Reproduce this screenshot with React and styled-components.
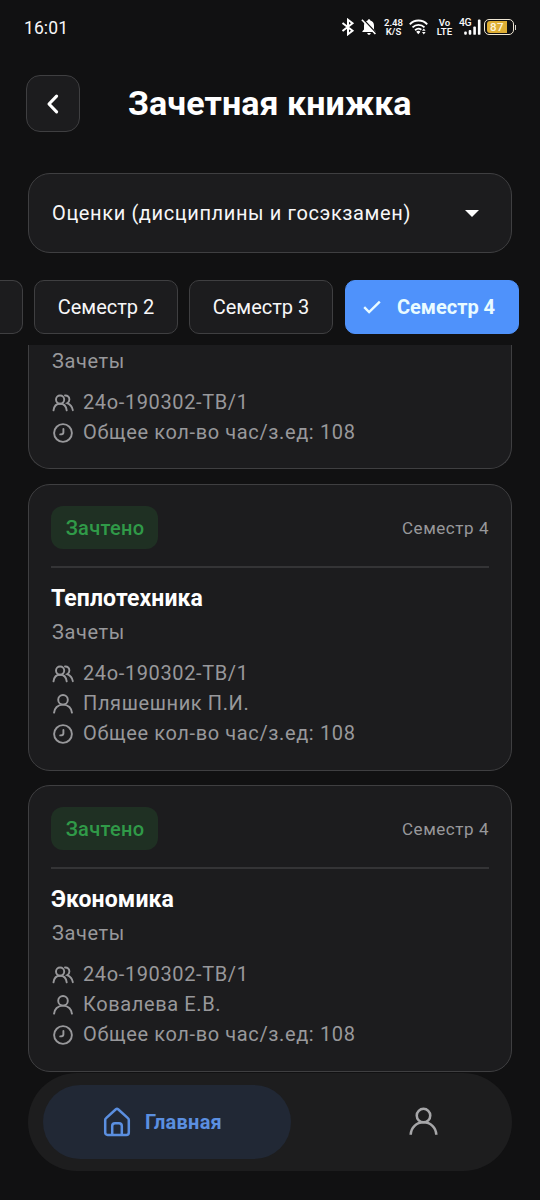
import styled, { createGlobalStyle } from "styled-components";

const GlobalStyle = createGlobalStyle`
  * {
    box-sizing: border-box;
  }

  body {
    margin: 0;
    background: #111112;
    font-family: Roboto, "Liberation Sans", sans-serif;
    color: #f7f7f8;
  }

  svg {
    display: block;
    flex: none;
  }
`;

const semesters = [
  { name: "Семестр 2", active: false },
  { name: "Семестр 3", active: false },
  { name: "Семестр 4", active: true },
];

const records = [
  {
    kind: "Зачеты",
    group: "24о-190302-ТВ/1",
    hours: 108,
  },
  {
    status: "Зачтено",
    semester: "Семестр 4",
    subject: "Теплотехника",
    kind: "Зачеты",
    group: "24о-190302-ТВ/1",
    teacher: "Пляшешник П.И.",
    hours: 108,
  },
  {
    status: "Зачтено",
    semester: "Семестр 4",
    subject: "Экономика",
    kind: "Зачеты",
    group: "24о-190302-ТВ/1",
    teacher: "Ковалева Е.В.",
    hours: 108,
  },
];

function BluetoothIcon() {
  return (
    <svg width="14" height="18" viewBox="0 0 14 18" fill="none" stroke="#fff" strokeWidth="2">
      <path d="M1.5 5 L11.5 12.8 L7 16.2 V1.8 L11.5 5.2 L1.5 13" />
    </svg>
  );
}

function BellOffIcon() {
  return (
    <svg width="16" height="18" viewBox="0 0 16 18">
      <path
        d="M8 1.2 C8.8 1.2 9.3 1.8 9.3 2.5 C11.7 3.1 13 5 13 7.5 V11.5 L14.6 13.2 V14 H1.4 V13.2 L3 11.5 V7.5 C3 5 4.3 3.1 6.7 2.5 C6.7 1.8 7.2 1.2 8 1.2 Z M6.3 14.9 H9.7 C9.7 16 9 16.7 8 16.7 C7 16.7 6.3 16 6.3 14.9 Z"
        fill="#fff"
      />
      <path d="M2.2 1.2 L15.6 15.4" stroke="#111112" strokeWidth="1.4" />
      <path d="M0.9 1.8 L14.4 16" stroke="#fff" strokeWidth="1.6" />
    </svg>
  );
}

function WifiIcon() {
  return (
    <svg width="19" height="16" viewBox="0 0 19 16" fill="none" stroke="#fff" strokeWidth="1.9">
      <path d="M0.8 5.3 C5.5 0.3 13.5 0.3 18.2 5.3" />
      <path d="M3.5 8.4 C6.9 5 12.1 5 15.5 8.4" />
      <path d="M6.1 11.2 C8 9.4 10.6 9.4 12.3 10.8" />
      <path d="M7.2 12.7 C8.6 11.4 10.2 11.4 11.4 12.7 L9.3 15.2 Z" fill="#fff" stroke="none" />
      <path d="M13 11.8 L14.8 9.4 L16.6 11.8 Z M13 13 L14.8 15.4 L16.6 13 Z" fill="#fff" stroke="none" />
    </svg>
  );
}

function SignalIcon() {
  return (
    <svg width="17" height="16" viewBox="0 0 17 16" fill="#fff">
      <rect x="0.2" y="12.6" width="2.6" height="3.2" rx="1" />
      <rect x="4.7" y="10.9" width="2.6" height="4.9" rx="1" />
      <rect x="9.3" y="7.6" width="2.6" height="8.2" rx="0.9" />
      <rect x="13.9" y="0.6" width="2.6" height="15.2" rx="0.9" />
    </svg>
  );
}

function BackIcon() {
  return (
    <svg width="14" height="22" viewBox="0 0 14 22" fill="none" stroke="#fff" strokeWidth="3.1" strokeLinecap="round" strokeLinejoin="round">
      <path d="M10.6 3.2 L3 11 L10.6 18.8" />
    </svg>
  );
}

function CheckIcon() {
  return (
    <svg width="18" height="14" viewBox="0 0 18 14" fill="none" stroke="#e9fbff" strokeWidth="2.4">
      <path d="M1.2 7.2 L6.1 12 L16.8 1.6" />
    </svg>
  );
}

function GroupIcon() {
  return (
    <svg width="22" height="22" viewBox="0 0 22 22" fill="none" stroke="currentColor" strokeWidth="1.9" strokeLinecap="round">
      <circle cx="8.1" cy="7.6" r="4.1" />
      <path d="M1.5 18.4 C2 14.4 4.6 11.8 8.1 11.8 C11.6 11.8 14.2 14.4 14.7 18.4" />
      <path d="M13 3.5 C15.6 3.3 17.4 5 17.4 7.4 C17.4 9.1 16.5 10.4 15.1 11.2 C18.3 12.5 20.3 15 20.8 18.2" />
    </svg>
  );
}

function PersonIcon({ size = 22, stroke = 1.9 }) {
  return (
    <svg width={size} height={size} viewBox="0 0 22 22" fill="none" stroke="currentColor" strokeWidth={stroke}>
      <circle cx="11" cy="6.8" r="4.8" />
      <path d="M1.9 20.4 C2.1 15.2 6 11.6 11 11.6 C16 11.6 19.9 15.2 20.1 20.4" />
    </svg>
  );
}

function ClockIcon() {
  return (
    <svg width="22" height="22" viewBox="0 0 22 22" fill="none" stroke="currentColor" strokeWidth="1.9" strokeLinecap="round" strokeLinejoin="round">
      <circle cx="11" cy="11" r="8.9" />
      <path d="M11.4 6.9 V10.4 C11.4 11.8 10.4 12.4 8.2 12.4" />
    </svg>
  );
}

function HomeIcon() {
  return (
    <svg width="28" height="30" viewBox="0 0 28 30" fill="none" stroke="currentColor" strokeWidth="2.5" strokeLinejoin="round">
      <path d="M2.2 13 C2.2 12.2 2.5 11.6 3.1 11.1 L12.9 2.2 C13.6 1.6 14.4 1.6 15.1 2.2 L24.9 11.1 C25.5 11.6 25.8 12.2 25.8 13 V25.4 C25.8 27 25 27.9 23.4 27.9 H4.6 C3 27.9 2.2 27 2.2 25.4 Z" />
      <path d="M9.2 27.5 V19 C9.2 17.2 10.3 16.2 12 16.2 H16 C17.7 16.2 18.8 17.2 18.8 19 V27.5" />
    </svg>
  );
}

function RecordCard({ record }) {
  return (
    <Card $scrolled={!record.subject}>
      {record.subject && (
        <>
          <CardHead>
            <Badge>{record.status}</Badge>
            <CardSemester>{record.semester}</CardSemester>
          </CardHead>
          <Subject>{record.subject}</Subject>
        </>
      )}
      <Kind>{record.kind}</Kind>
      <Info>
        <GroupIcon />
        {record.group}
      </Info>
      {record.teacher && (
        <Info>
          <PersonIcon />
          {record.teacher}
        </Info>
      )}
      <Info>
        <ClockIcon />
        Общее кол-во час/з.ед: {record.hours}
      </Info>
    </Card>
  );
}

function App() {
  return (
    <Screen>
      <GlobalStyle />
      <StatusBar>
        <Time>16:01</Time>
        <StatusIcons>
          <BluetoothIcon />
          <BellOffIcon />
          <Stacked $width={21}>
            <span>2.48</span>
            <span>K/S</span>
          </Stacked>
          <WifiIcon />
          <Stacked $width={17}>
            <span>Vo</span>
            <span>LTE</span>
          </Stacked>
          <Network>
            <NetworkType>4G</NetworkType>
            <SignalIcon />
          </Network>
          <BatteryWrap>
            <Battery>
              <BatteryLevel>87</BatteryLevel>
            </Battery>
            <BatteryTip />
          </BatteryWrap>
        </StatusIcons>
      </StatusBar>

      <Header>
        <BackButton>
          <BackIcon />
        </BackButton>
        <Title>Зачетная книжка</Title>
      </Header>

      <Select>
        Оценки (дисциплины и госэкзамен)
        <Caret />
      </Select>

      <Chips>
        <ChipEdge />
        {semesters.map((semester) => (
          <Chip key={semester.name} $active={semester.active}>
            {semester.active && <CheckIcon />}
            {semester.name}
          </Chip>
        ))}
      </Chips>

      <List>
        {records.map((record, i) => (
          <RecordCard record={record} key={i} />
        ))}
      </List>

      <Nav>
        <NavItem $active>
          <HomeIcon />
          Главная
        </NavItem>
        <NavItem>
          <PersonIcon size={31} stroke={1.8} />
        </NavItem>
      </Nav>
    </Screen>
  );
}

const Screen = styled.div`
  width: 540px;
  height: 1200px;
  overflow: hidden;
  display: flex;
  flex-direction: column;
  background: #111112;
`;

const StatusBar = styled.div`
  height: 56px;
  flex: none;
  display: flex;
  align-items: center;
  justify-content: space-between;
  padding: 0 23px 0 24px;
`;

const Time = styled.span`
  font-size: 17.5px;
  letter-spacing: 0.1px;
`;

const StatusIcons = styled.div`
  display: grid;
  grid-template-columns: 20px 22px 26px 27px 23px 25px 33px;
  align-items: center;
  padding-bottom: 2px;
`;

const Stacked = styled.div`
  width: ${(props) => props.$width}px;
  display: flex;
  flex-direction: column;
  align-items: center;
  font-size: 9.6px;
  line-height: 9.5px;
  font-weight: 600;
`;

const Network = styled.div`
  display: flex;
  align-items: flex-end;
`;

const NetworkType = styled.span`
  align-self: flex-start;
  width: 12px;
  margin-right: -7px;
  font-size: 10.5px;
  line-height: 8px;
  font-weight: 500;
  letter-spacing: -0.5px;
`;

const BatteryWrap = styled.div`
  display: flex;
  align-items: center;
  gap: 1px;
`;

const Battery = styled.div`
  width: 30px;
  height: 16px;
  padding: 1px 2px;
  border: 1px solid #eee6d4;
  border-radius: 5px;
`;

const BatteryTip = styled.span`
  width: 1px;
  height: 5px;
  background: #d8d4cc;
`;

const BatteryLevel = styled.div`
  width: 20px;
  height: 12px;
  border-radius: 3px 0 0 3px;
  background: #deae34;
  color: #fbf3da;
  font-size: 11.5px;
  line-height: 13px;
  font-weight: 500;
  letter-spacing: 0.4px;
  text-align: center;
`;

const Header = styled.header`
  flex: none;
  height: 57px;
  margin-top: 19px;
  padding-left: 26px;
  display: flex;
  align-items: center;
`;

const BackButton = styled.button`
  width: 54px;
  height: 57px;
  padding: 0;
  display: flex;
  align-items: center;
  justify-content: center;
  border: 1px solid #3f3f41;
  border-radius: 14px;
  background: #1c1c1e;
`;

const Title = styled.h1`
  margin: 0 0 2px 48px;
  font-size: 34px;
  line-height: 40px;
  font-weight: 700;
  letter-spacing: 0.07px;
  color: #fff;
`;

const Select = styled.div`
  flex: none;
  height: 80px;
  margin: 41px 28px 0;
  padding: 0 32px 0 23px;
  display: flex;
  align-items: center;
  justify-content: space-between;
  border: 1px solid #3f3f41;
  border-radius: 22px;
  background: #1c1c1e;
  font-size: 20px;
  letter-spacing: 0.62px;
`;

const Caret = styled.span`
  border: 7px solid transparent;
  border-top-color: #fff;
  border-bottom: 0;
`;

const Chips = styled.div`
  flex: none;
  height: 54px;
  margin-top: 27px;
  display: flex;
  gap: 11px;
`;

const ChipEdge = styled.div`
  width: 23px;
  border: 1px solid #3f3f41;
  border-left: 0;
  border-radius: 0 10px 10px 0;
  background: #1c1c1e;
`;

const Chip = styled.button`
  width: ${(props) => (props.$active ? 174 : 144)}px;
  margin-left: ${(props) => (props.$active ? 1 : 0)}px;
  padding: ${(props) => (props.$active ? "0 6px 0 0" : 0)};
  display: flex;
  align-items: center;
  justify-content: center;
  gap: 16px;
  border: 1px solid ${(props) => (props.$active ? "#4f92fb" : "#3f3f41")};
  border-radius: 10px;
  background: ${(props) => (props.$active ? "#4f92fb" : "#1c1c1e")};
  color: ${(props) => (props.$active ? "#e9fbff" : "#f7f7f8")};
  font-family: inherit;
  font-size: 20px;
  font-weight: ${(props) => (props.$active ? 700 : 400)};
`;

const List = styled.main`
  flex: none;
  height: 727px;
  margin-top: 11px;
  padding: 0 28px;
  display: flex;
  flex-direction: column;
  gap: 14px;
  overflow: hidden;
`;

const Card = styled.article`
  flex: none;
  margin-bottom: ${(props) => (props.$scrolled ? 1 : 0)}px;
  padding: ${(props) => (props.$scrolled ? "1px 22px 21px" : "21px 22px 22px")};
  border: 1px solid #3f3f41;
  border-top-width: ${(props) => (props.$scrolled ? 0 : 1)}px;
  border-radius: ${(props) => (props.$scrolled ? "0 0 22px 22px" : "22px")};
  background: #1c1c1e;
`;

const CardHead = styled.div`
  display: flex;
  align-items: center;
  justify-content: space-between;
  padding-bottom: 17px;
  border-bottom: 2px solid #343436;
`;

const Badge = styled.span`
  width: 107px;
  height: 43px;
  padding-left: 1px;
  display: flex;
  align-items: center;
  justify-content: center;
  border-radius: 12px;
  background: #1f3023;
  color: #309a48;
  font-size: 20px;
  font-weight: 500;
  letter-spacing: 0.3px;
`;

const CardSemester = styled.span`
  font-size: 17px;
  letter-spacing: 0.55px;
  color: #98989b;
`;

const Subject = styled.h2`
  margin: 16px 0 0;
  font-size: 23px;
  line-height: 30px;
  font-weight: 700;
  letter-spacing: 0.1px;
  color: #fff;
`;

const Kind = styled.div`
  margin: 3px 0 11px;
  padding-left: 1px;
  font-size: 20px;
  line-height: 30px;
  letter-spacing: 0.6px;
  color: #98989b;

  ${Card} > &:first-child {
    margin-top: 0;
  }
`;

const Info = styled.div`
  display: flex;
  align-items: center;
  gap: 9px;
  height: 30px;
  padding-left: 1px;
  font-size: 20px;
  letter-spacing: 0.62px;
  color: #98989b;

  svg {
    margin-top: 2px;
  }
`;

const Nav = styled.nav`
  flex: none;
  height: 98px;
  margin: 1px 28px 0;
  padding: 12px 15px;
  display: flex;
  border-radius: 49px;
  background: #1d1d1e;
`;

const NavItem = styled.button`
  flex: none;
  width: ${(props) => (props.$active ? 248 : 206)}px;
  padding: ${(props) => (props.$active ? "0 9px 1px 0" : "0 0 2px 58px")};
  display: flex;
  align-items: center;
  justify-content: center;
  gap: 14px;
  border: 0;
  border-radius: 37px;
  background: ${(props) => (props.$active ? "#212835" : "transparent")};
  color: ${(props) => (props.$active ? "#5b8fe0" : "#a6a6a8")};
  font-family: inherit;
  font-size: 20px;
  font-weight: 700;
  letter-spacing: 0.25px;
`;

export default App;
